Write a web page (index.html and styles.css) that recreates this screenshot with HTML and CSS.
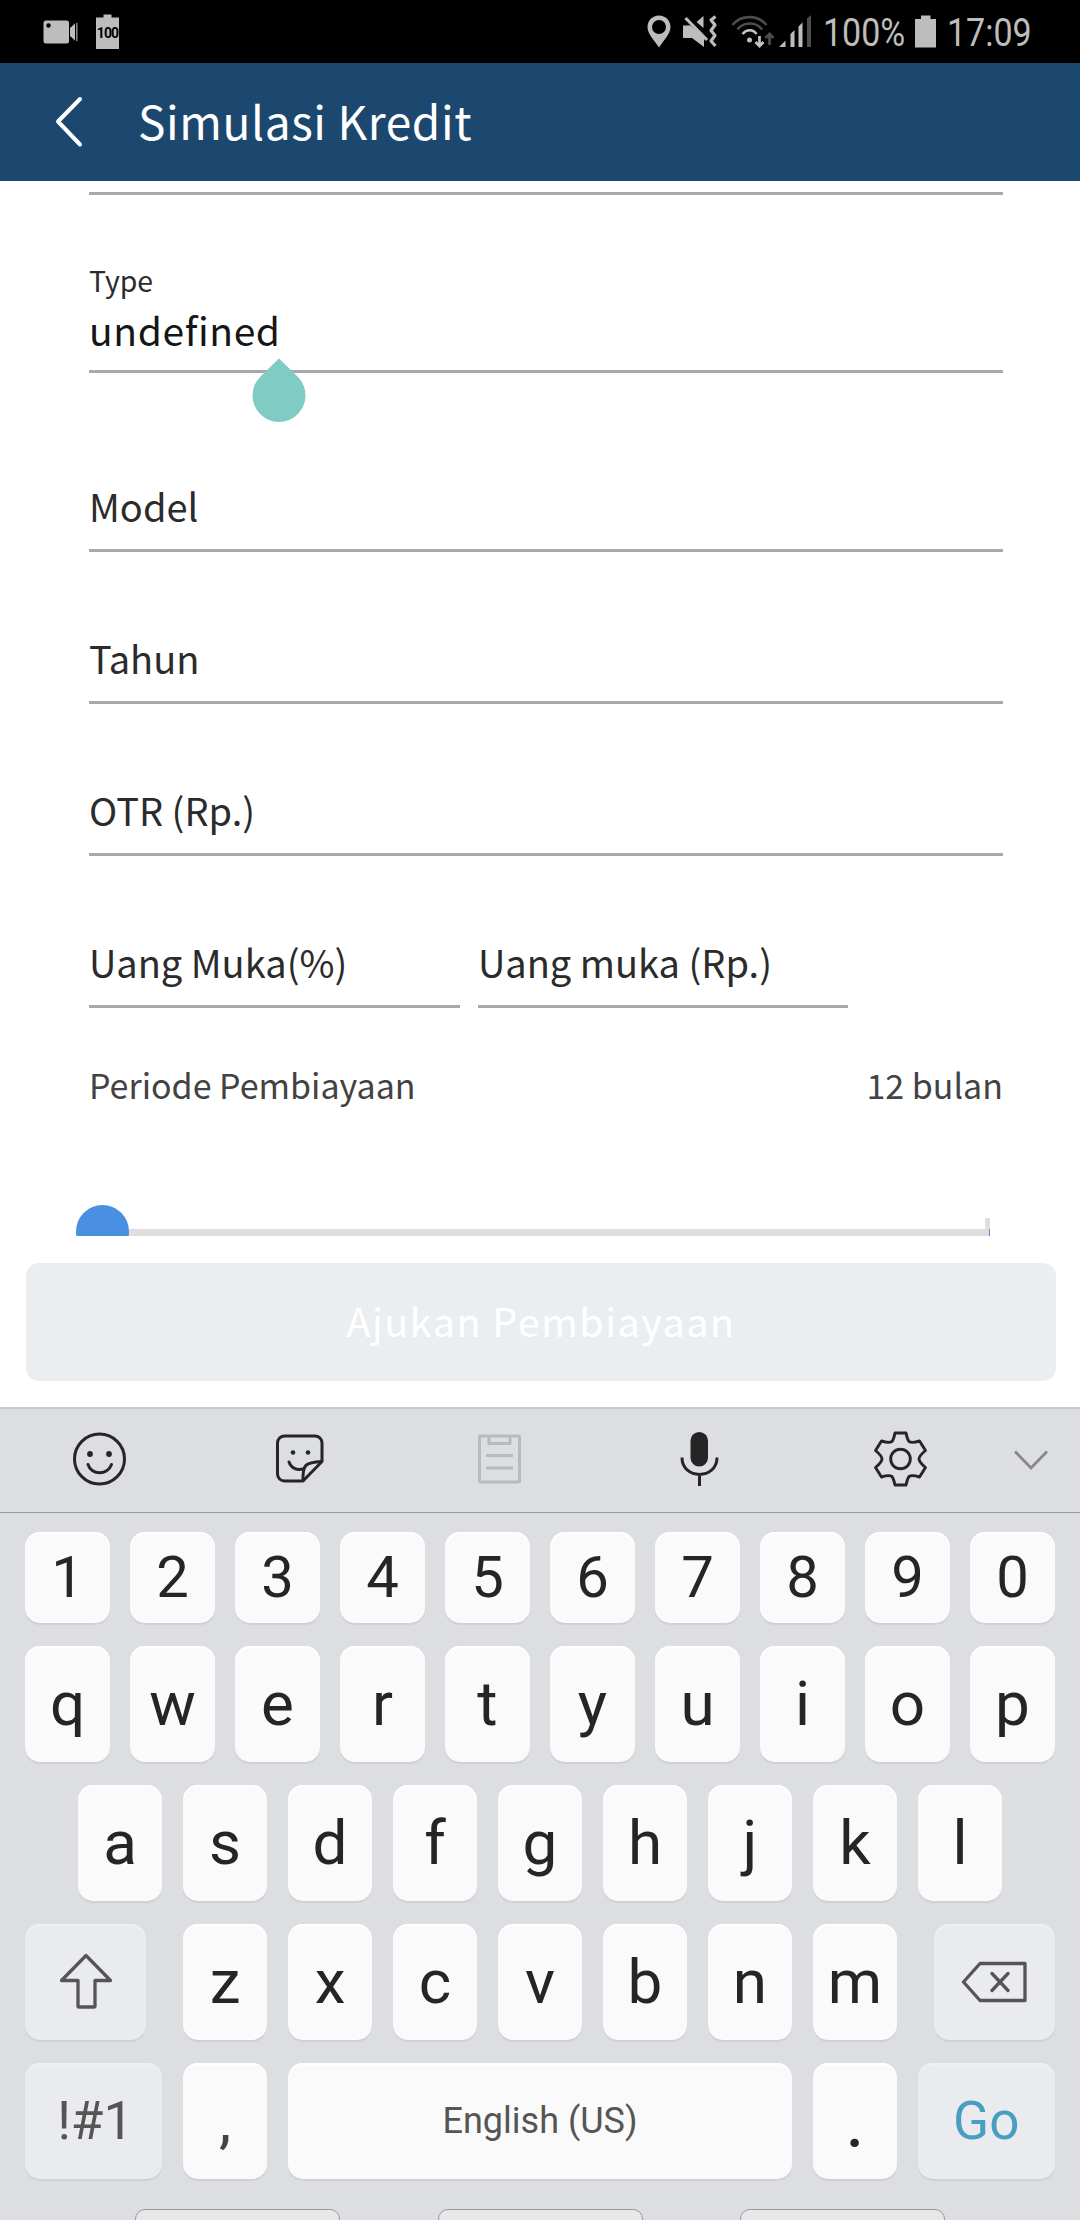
FILE: index.html
```html
<!DOCTYPE html>
<html lang="id">
<head>
<meta charset="utf-8">
<title>Simulasi Kredit</title>
<link rel="stylesheet" href="styles.css">
</head>
<body>
<div class="screen">
  <div class="status">
    <svg class="st-cam" width="36" height="24" viewBox="0 0 36 24"><rect x="0.5" y="0.5" width="25.5" height="23" rx="2.5"/><circle cx="5.500" cy="5.500" r="2.200" fill="#000"/><path d="M27 8l5-4.500v17L27 16z"/><path d="M33 3h1.500v18H33z" opacity=".7"/></svg>
    <div class="st-full">
      <svg width="23" height="36" viewBox="0 0 23 36"><path d="M7.500 0.500h8v3H23V35H0V3.500h7.500z"/></svg>
      <span>100</span>
    </div>
    <div class="st-gap"></div>
    <svg class="st-pin" width="24" height="33" viewBox="0 0 24 33"><path fill-rule="evenodd" d="M12 .5C5.500.5.500 5.600.500 12 .5 19 7 25 12 32.500 17 25 23.500 19 23.500 12 23.500 5.600 18.500.5 12 .5zM12 5a7 7 0 1 1 0 14 7 7 0 0 1 0-14z"/></svg>
    <svg class="st-mute" width="35" height="34" viewBox="0 0 35 34"><path d="M0 10.500h7.500L21 22v10L9 23H0zM13.500 7L20.500 1v12z"/><path d="M2.500 3L24 25" fill="none" stroke="#bdbdbd" stroke-width="3.200"/><path d="M32.500 1.500l-4.500 3.500 4 5-4 5.500 4 5-4 5.500 4.500 5" fill="none" stroke="#bdbdbd" stroke-width="3.200" stroke-linejoin="round"/></svg>
    <svg class="st-wifi" width="44" height="34" viewBox="0 0 44 34"><g fill="none" stroke-width="2.700"><path d="M1.500 10C10-.5 27-.5 35.500 10" stroke="#4d4d4d"/><path d="M6.500 14.500c6-8 18.500-8 24.500 0" stroke="#4d4d4d"/><path d="M11.500 19c4-5 10.500-5 14 0" stroke="#c4c4c4"/><path d="M28.500 21v10M24.500 27l4 4 4-4" stroke="#c4c4c4"/><path d="M38.500 30V19M34.500 23l4-4 4 4" stroke="#4d4d4d"/></g><circle cx="18.500" cy="25" r="2.500"/></svg>
    <svg class="st-sig" width="33" height="33" viewBox="0 0 33 33"><path d="M0 32l6.500-6.500V32zM11.500 19l4-4v17h-4zM19.500 11.500l4-4V32h-4z"/><path d="M28 3.500l4-3.500v32h-4z" fill="#4d4d4d"/></svg>
    <span class="st-text st-pct">100%</span>
    <svg class="st-bat" width="21" height="33" viewBox="0 0 21 33"><path d="M6 .5h9.500V4H21v28.500H0V4h6z"/></svg>
    <span class="st-text">17:09</span>
  </div>

  <header class="bar">
    <svg width="30" height="54" viewBox="0 0 30 54"><path d="M26 4L4 26.500 26 49.500" fill="none" stroke="#fff" stroke-width="4" stroke-linecap="round" stroke-linejoin="round"/></svg>
    <h1>Simulasi Kredit</h1>
  </header>

  <main class="form">
    <div class="field first"></div>
    <div class="field typed">
      <label>Type</label>
      <div class="value">undefined</div>
      <svg class="handle" width="54" height="64" viewBox="0 0 54 64"><path d="M27 .5L46 19A26.500 26.500 0 1 1 8 19z" fill="#80cbc4"/></svg>
    </div>
    <div class="field model"><span>Model</span></div>
    <div class="field"><span>Tahun</span></div>
    <div class="field"><span>OTR (Rp.)</span></div>
    <div class="pair">
      <div class="field"><span>Uang Muka(%)</span></div>
      <div class="field"><span>Uang muka (Rp.)</span></div>
    </div>
    <div class="period"><span>Periode Pembiayaan</span><span>12 bulan</span></div>
    <div class="slider"><div class="track"></div><div class="tick"></div><div class="knob"></div></div>
  </main>

  <div class="action"><button>Ajukan Pembiayaan</button></div>

  <section class="keyboard">
    <div class="tools">
      <div class="tool"><svg width="60" height="60" viewBox="0 0 60 60"><circle cx="29.500" cy="30" r="25" stroke-width="3"/><path d="M18 35.500c3.500 11 19.500 11 23.500 0" stroke-width="3" stroke-linecap="round"/><g class="solid"><circle cx="20" cy="25" r="2.900"/><circle cx="39" cy="25" r="2.900"/></g></svg></div>
      <div class="tool"><svg width="60" height="60" viewBox="0 0 60 60"><g stroke-width="3" stroke-linejoin="round"><path d="M33 52H14.500a7 7 0 0 1-7-7V14a7 7 0 0 1 7-7H45a7 7 0 0 1 7 7v18.500z"/><path d="M33 52c-.5-16 1.500-18.500 19-19.500"/><path d="M19 33c2 6 7.500 8.500 14.500 7" stroke-linecap="round"/></g><g class="solid"><circle cx="23" cy="23.500" r="2.300"/><circle cx="38" cy="23.500" r="2.300"/></g></svg></div>
      <div class="tool faded"><svg width="60" height="60" viewBox="0 0 60 60"><g stroke-width="3"><rect x="9.500" y="7" width="40" height="46" rx="1"/><path d="M19 8v6.500h21V8M16 26.500h27M16 39h27"/></g></svg></div>
      <div class="tool"><svg width="60" height="60" viewBox="0 0 60 60"><rect class="solid" x="20.500" y="3" width="17.500" height="34.500" rx="8.700"/><path d="M12 28.500c0 22.500 35 22.500 35 0M29.500 45.500V57" stroke-width="3"/></svg></div>
      <div class="tool"><svg width="60" height="60" viewBox="0 0 60 60"><g stroke-width="2.900" stroke-linejoin="round"><circle cx="30.500" cy="30" r="9.800"/><path d="M25 4h11q1.200 6 3 8.500 3 2 10.500-.5l6 9.500Q49 27 49 30t6.500 8.500l-6 9.500q-7.500-2.500-10.500-.5-1.800 2.500-3 8.500H25q-1.200-6-3-8.500-3-2-10.500.5l-6-9.500Q12 33 12 30t-6.500-8.500l6-9.500q7.500 2.500 10.500.5 1.800-2.500 3-8.500z"/></g></svg></div>
      <div class="collapse"><svg width="40" height="24" viewBox="0 0 40 24"><path d="M4 3.500l16 16.500L36 3.500" fill="none" stroke="#888" stroke-width="2.800"/></svg></div>
    </div>

    <div class="keys">
      <div class="row nums"><div class="key">1</div><div class="key">2</div><div class="key">3</div><div class="key">4</div><div class="key">5</div><div class="key">6</div><div class="key">7</div><div class="key">8</div><div class="key">9</div><div class="key">0</div></div>
      <div class="row"><div class="key">q</div><div class="key">w</div><div class="key">e</div><div class="key">r</div><div class="key">t</div><div class="key">y</div><div class="key">u</div><div class="key">i</div><div class="key">o</div><div class="key">p</div></div>
      <div class="row"><div class="key">a</div><div class="key">s</div><div class="key">d</div><div class="key">f</div><div class="key">g</div><div class="key">h</div><div class="key">j</div><div class="key">k</div><div class="key">l</div></div>
      <div class="row">
        <div class="key fn shift"><svg width="60" height="60" viewBox="0 0 60 60"><path d="M30 4L54.500 29H39v25.500q0 1-1 1H23q-1 0-1-1V29H5.500z" transform="translate(0 -.5)"/></svg></div>
        <div class="key">z</div><div class="key">x</div><div class="key">c</div><div class="key">v</div><div class="key">b</div><div class="key">n</div><div class="key">m</div>
        <div class="key fn erase"><svg width="68" height="44" viewBox="0 0 68 44"><path d="M3.500 22L20 3.500h45v37H20zM32 13.500l16 17M48 13.500l-16 17" stroke-linecap="round"/></svg></div>
      </div>
      <div class="row">
        <div class="key fn wide symbols">!#1</div>
        <div class="key comma">,</div>
        <div class="key space">English (US)</div>
        <div class="key dot">.</div>
        <div class="key fn wide go">Go</div>
      </div>
    </div>
    <div class="nav"><i></i><i></i><i></i></div>
  </section>
</div>
</body>
</html>
```
FILE: styles.css
```css
* { box-sizing: border-box; }
body { margin: 0; background: #fff; }
svg { display: block; flex: none; }

.screen {
  width: 1080px;
  height: 2220px;
  overflow: hidden;
  display: flex;
  flex-direction: column;
  font-family: "Noto Sans CJK SC", "Noto Sans", sans-serif;
}

/* status bar */
.status {
  height: 63px;
  flex: none;
  background: #000;
  display: flex;
  align-items: center;
  padding: 0 43px;
  color: #bdbdbd;
  font-family: Roboto, sans-serif;
}
.status svg { fill: #bdbdbd; }
.st-full { position: relative; margin-left: 17px; }
.st-full span {
  position: absolute;
  left: 0;
  top: 10px;
  width: 23px;
  text-align: center;
  font: bold 14px/18px Roboto, sans-serif;
  letter-spacing: -0.9px;
  color: #000;
}
.st-gap { flex: 1; }
.st-mute { margin-left: 12px; }
.st-wifi { margin-left: 13px; }
.st-sig { margin-left: 4px; }
.st-bat { margin-left: 11px; margin-right: 11px; }
.st-text {
  width: 90px;
  font-size: 39.5px;
  line-height: 64px;
  padding-top: 3px;
  white-space: nowrap;
  transform: scaleX(.86);
  transform-origin: left;
}
.st-pct { width: 81px; margin-left: 11px; }

/* title bar */
.bar {
  height: 118px;
  flex: none;
  background: #1c4870;
  display: flex;
  align-items: center;
  padding-left: 54px;
  color: #fff;
}
.bar h1 {
  margin: 0 0 5px 54px;
  font-size: 46px;
  line-height: 80px;
  font-weight: 400;
  letter-spacing: 0.6px;
}

/* form */
.form {
  height: 1055px;
  flex: none;
  overflow: hidden;
  padding: 0 77px 0 89px;
  color: #2b2b2b;
}
.field {
  height: 152px;
  border-bottom: 3px solid #a9a9a9;
  display: flex;
  flex-direction: column;
  justify-content: flex-end;
  padding-bottom: 18px;
  font-size: 38px;
  line-height: 50px;
}
.first { height: 14px; padding: 0; }
.typed { height: 178px; position: relative; padding-bottom: 16px; }
.model { height: 179px; }
.typed label { font-size: 28.4px; line-height: 40px; margin-bottom: 4px; }
.value { color: #151515; font-size: 39px; letter-spacing: 0.6px; }
.handle { position: absolute; left: 163px; top: 163px; }
.pair { display: grid; grid-template-columns: 371px 370px; gap: 18px; }
.period {
  display: flex;
  justify-content: space-between;
  margin-top: 52px;
  font-size: 34px;
  line-height: 50px;
  color: #424242;
}
.slider { position: relative; height: 53px; margin-top: 95px; }
.track { position: absolute; left: 13px; top: 24px; width: 888px; height: 8px; background: linear-gradient(90deg, #dedede 887px, #4a90e2 887px); }
.tick { position: absolute; left: 896px; top: 13px; width: 5px; height: 11px; background: #dedede; }
.knob { position: absolute; left: -13px; top: 0; width: 53px; height: 53px; border-radius: 50%; background: #4a90e2; }

.action { height: 171px; flex: none; padding: 27px 24px 26px 26px; }
.action button {
  display: block;
  width: 1030px;
  height: 118px;
  border: 0;
  border-radius: 13px;
  background: #ebeef1;
  color: #fff;
  font: 400 39.5px/114px "Noto Sans CJK SC", sans-serif;
  letter-spacing: 1.5px;
  padding: 0 0 4px;
}

/* keyboard */
.keyboard {
  height: 813px;
  flex: none;
  background: #dddee2;
  border-top: 2px solid #c9cacc;
  font-family: Roboto, sans-serif;
  color: #252525;
}
.tools {
  height: 104px;
  border-bottom: 1px solid #999;
  display: flex;
  align-items: center;
}
.tool { width: 200px; display: flex; justify-content: center; padding-bottom: 3px; }
.tool svg { fill: none; stroke: #252525; }
.tool .solid { fill: #252525; stroke: none; }
.tool.faded svg { stroke: #b9babc; }
.collapse { padding: 0 0 2px 11px; }
.keys { padding: 19px 25px 0; display: flex; flex-direction: column; gap: 23px; }
.row { display: flex; justify-content: center; gap: 20.6px; height: 116px; }
.nums { height: 91px; }
.key {
  width: 84.4px;
  flex: none;
  border-radius: 15px;
  background: #fafafa;
  box-shadow: 0 1.500px 1px #cfd0d3, inset 0 2px 1px #fff;
  display: flex;
  align-items: center;
  justify-content: center;
  font-size: 62px;
  padding-bottom: 2px;
}
.nums .key { font-size: 58px; padding-bottom: 1px; }
.fn { background: #e9ebef; color: #555; box-shadow: 0 1.500px 1px #cfd0d3, inset 0 2px 1px #eff0f2; }
.fn svg { fill: none; stroke: #555; stroke-width: 3.300px; stroke-linejoin: round; }
.key.shift { width: 121px; margin-right: 16px; padding: 0; }
.key.erase { width: 121px; margin-left: 16px; padding: 0; }
.key.wide { width: 137px; font-size: 53px; padding-bottom: 0; }
.key.symbols { padding-left: 3px; }
.key.space { width: 504.4px; font-size: 36px; color: #555; padding-bottom: 0; }
.comma { color: #444; }
.key.dot { font-size: 76px; padding-bottom: 3px; }
.key.go { color: #4a9fc0; }
.nav { display: flex; gap: 97.5px; padding: 30px 0 0 135px; height: 42px; overflow: hidden; }
.nav i { width: 205px; height: 60px; flex: none; border: 1px solid #999; border-radius: 10px; background: #e6e8ea; }
```
